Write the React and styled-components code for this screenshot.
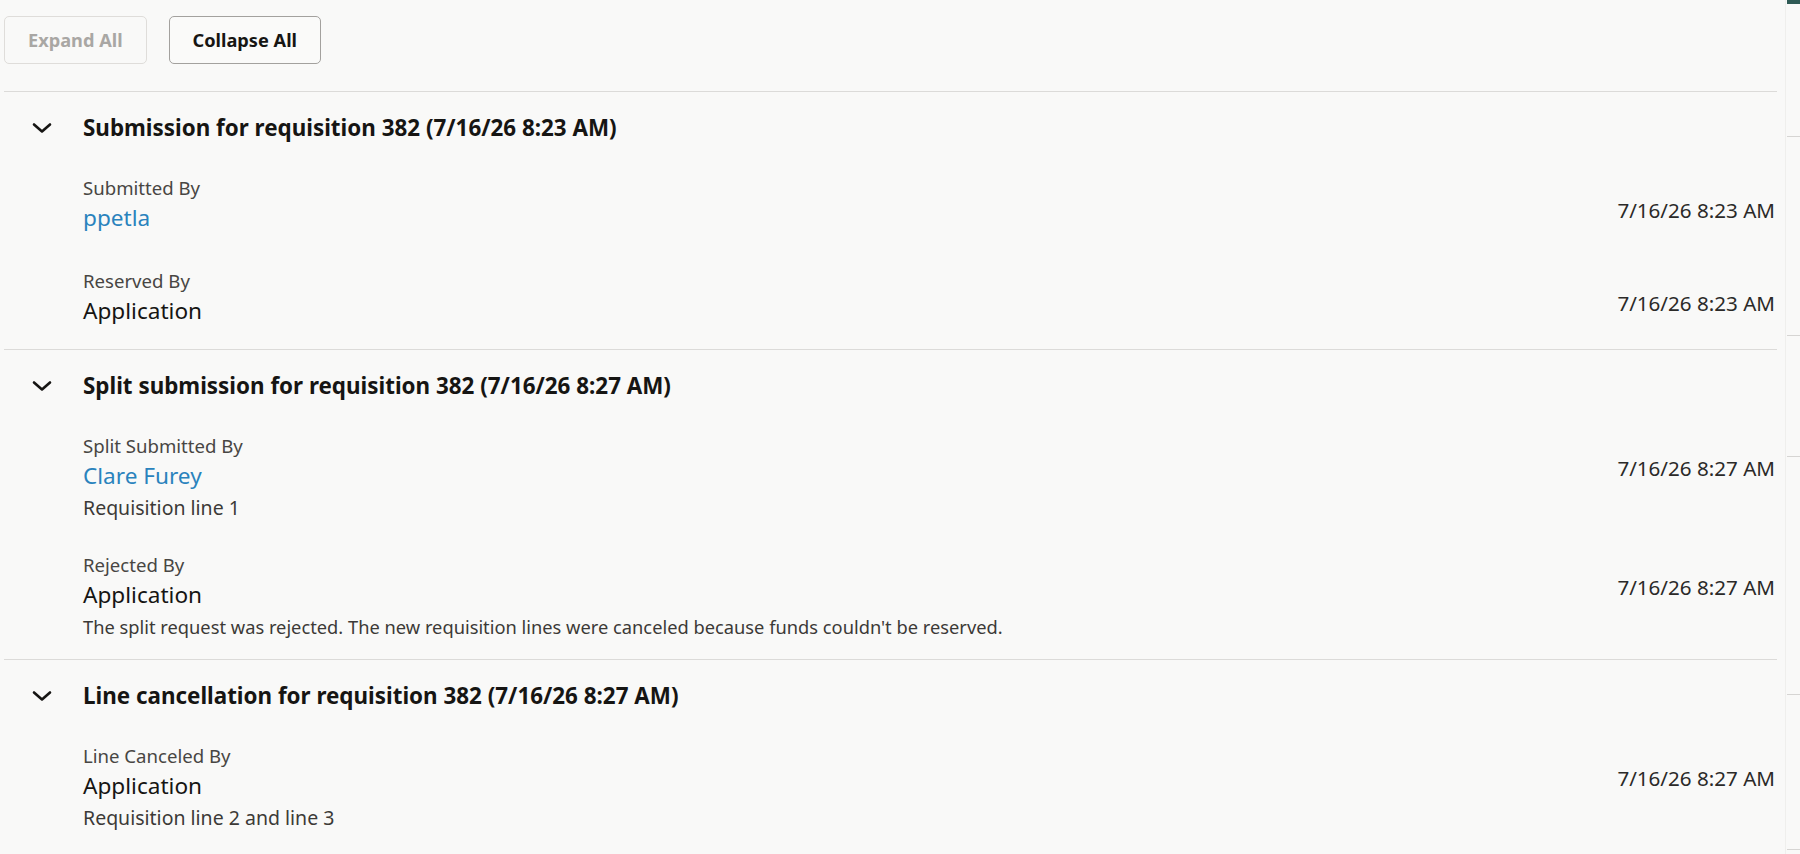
import React from "react";
import styled, { createGlobalStyle } from "styled-components";

const Global = createGlobalStyle`
  html, body {
    margin: 0;
    padding: 0;
    height: 100%;
    overflow: hidden;
    background: #f9f9f8;
  }
  body {
    font-family: "Noto Sans", "Open Sans", Arial, sans-serif;
    color: #161513;
  }
`;

const Page = styled.div`
  display: flex;
  width: 1800px;
  height: 854px;
`;

const Main = styled.main`
  flex: 1;
  padding: 0 8px 0 4px;
  min-width: 0;
`;

const Rail = styled.aside`
  width: 14px;
  border-left: 1px solid #efefed;
  display: flex;
  flex-direction: column;
  align-items: flex-end;
`;

const RailCap = styled.div`
  width: 13px;
  height: 4px;
  background: #2f5a55;
`;

const RailTick = styled.div`
  width: 13px;
  height: 1px;
  background: #d6d5d3;
  margin-top: ${(p) => p.$gap}px;
`;

const Toolbar = styled.div`
  display: flex;
  gap: 22px;
  padding: 16px 0 27px;
`;

const Button = styled.button`
  height: 48px;
  padding: 0 23px;
  border-radius: 5px;
  font-family: "Noto Sans", "Open Sans", Arial, sans-serif;
  font-size: 18.2px;
  font-weight: 700;
  background: ${(p) => (p.disabled ? "transparent" : "#fafaf9")};
  color: ${(p) => (p.disabled ? "#a9a7a4" : "#161513")};
  border: 1px solid ${(p) => (p.disabled ? "#dfddda" : "#a3a19e")};
  cursor: ${(p) => (p.disabled ? "default" : "pointer")};
`;

const Section = styled.section`
  border-top: 1px solid #dcdbd9;
  padding-bottom: 21px;
`;

const SectionHeader = styled.div`
  display: flex;
  align-items: center;
  gap: 31px;
  padding: 21px 0 0 28px;
  height: 30px;
  box-sizing: content-box;
`;

const Chevron = styled.svg`
  width: 20px;
  height: 12px;
  flex: none;
`;

const Title = styled.h3`
  margin: 0;
  font-size: 22.4px;
  line-height: 30px;
  font-weight: 700;
  color: #161513;
`;

const Items = styled.div`
  display: flex;
  flex-direction: column;
  gap: 33px;
  padding: 32px 2px 0 79px;
`;

const Item = styled.div`
  display: grid;
  grid-template-columns: 1fr auto;
`;

const Label = styled.div`
  grid-column: 1;
  font-size: 18.6px;
  line-height: 26px;
  color: #484643;
`;

const Name = styled.div`
  grid-column: 1;
  font-size: 22.6px;
  line-height: 34px;
  color: ${(p) => (p.$link ? "#2a83bd" : "#161513")};
`;

const Desc = styled.div`
  grid-column: 1;
  margin-top: 4px;
  font-size: ${(p) => (p.$message ? "18.3px" : "19.5px")};
  line-height: 22px;
  color: #3c3a37;
`;

const Stamp = styled.div`
  grid-column: 2;
  grid-row: 2;
  align-self: center;
  margin-top: -16px;
  font-size: 20.6px;
  line-height: 26px;
  color: #2b2a28;
  white-space: nowrap;
`;

const ChevronIcon = () => (
  <Chevron viewBox="0 0 20 12" aria-hidden="true">
    <path
      d="M2 2.5 L10 9.5 L18 2.5"
      fill="none"
      stroke="#161513"
      strokeWidth="2.6"
      strokeLinecap="round"
      strokeLinejoin="round"
    />
  </Chevron>
);

const data = [
  {
    title: "Submission for requisition 382 (7/16/26 8:23 AM)",
    items: [
      { label: "Submitted By", name: "ppetla", link: true, date: "7/16/26 8:23 AM" },
      { label: "Reserved By", name: "Application", date: "7/16/26 8:23 AM" },
    ],
  },
  {
    title: "Split submission for requisition 382 (7/16/26 8:27 AM)",
    items: [
      {
        label: "Split Submitted By",
        name: "Clare Furey",
        link: true,
        desc: "Requisition line 1",
        date: "7/16/26 8:27 AM",
      },
      {
        label: "Rejected By",
        name: "Application",
        desc: "The split request was rejected. The new requisition lines were canceled because funds couldn't be reserved.",
        message: true,
        date: "7/16/26 8:27 AM",
      },
    ],
  },
  {
    title: "Line cancellation for requisition 382 (7/16/26 8:27 AM)",
    items: [
      {
        label: "Line Canceled By",
        name: "Application",
        desc: "Requisition line 2 and line 3",
        date: "7/16/26 8:27 AM",
      },
    ],
  },
];

export default function App() {
  return (
    <>
      <Global />
      <Page>
        <Main>
          <Toolbar>
            <Button disabled>Expand All</Button>
            <Button>Collapse All</Button>
          </Toolbar>
          {data.map((s) => (
            <Section key={s.title}>
              <SectionHeader>
                <ChevronIcon />
                <Title>{s.title}</Title>
              </SectionHeader>
              <Items>
                {s.items.map((it) => (
                  <Item key={it.label}>
                    <Label>{it.label}</Label>
                    <Name $link={it.link}>{it.name}</Name>
                    {it.desc && <Desc $message={it.message}>{it.desc}</Desc>}
                    <Stamp>{it.date}</Stamp>
                  </Item>
                ))}
              </Items>
            </Section>
          ))}
        </Main>
        <Rail>
          <RailCap />
          <RailTick $gap={132} />
          <RailTick $gap={198} />
          <RailTick $gap={120} />
          <RailTick $gap={237} />
          <RailTick $gap={154} />
        </Rail>
      </Page>
    </>
  );
}
